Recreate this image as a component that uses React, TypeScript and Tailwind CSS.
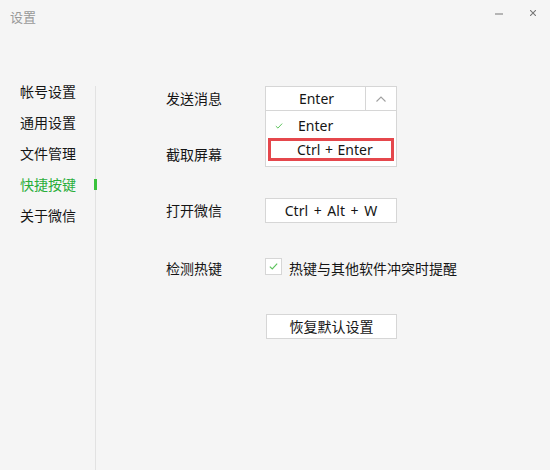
import React from "react";

const Check = ({ className }: { className?: string }) => (
  <svg viewBox="0 0 10 8" className={className} fill="none" stroke="currentColor" strokeWidth="1.3">
    <path d="M0.8 4.2 L3.6 6.8 L9.2 0.8" />
  </svg>
);

export default function App() {
  const items = ["帐号设置", "通用设置", "文件管理", "快捷按键", "关于微信"];
  return (
    <div className="w-[550px] h-[470px] bg-[#f5f5f5] flex flex-col overflow-hidden font-['Noto_Sans','Noto_Sans_CJK_SC',sans-serif] text-[14px] text-[#151515]">
      {/* title bar */}
      <div className="h-[86px] flex items-start justify-between shrink-0">
        <div className="pl-[10px] pt-[9px] text-[13px] leading-[16px] text-[#999]">设置</div>
        <div className="flex items-start">
          <div className="mt-[13px] w-[8px] h-[2px] bg-[#b5b5b5]" />
          <svg viewBox="0 0 6 6" className="ml-[27px] mr-[14px] mt-[10px] w-[6px] h-[6px]" stroke="#777" strokeWidth="1.1">
            <path d="M0 0 L6 6 M6 0 L0 6" />
          </svg>
        </div>
      </div>
      {/* body */}
      <div className="flex flex-1">
        <div className="w-[96px] border-r border-[#e2e2e2] shrink-0">
          <ul className="flex flex-col gap-[19px] pl-[20px]">
            {items.map((t) => (
              <li
                key={t}
                className={`relative leading-[12px] h-[12px] ${t === "快捷按键" ? "text-[#2aae3a]" : ""}`}
              >
                {t}
                {t === "快捷按键" && (
                  <span className="absolute right-[-2px] top-0 w-[3px] h-[11px] bg-[#39c23c]" />
                )}
              </li>
            ))}
          </ul>
        </div>
        <div className="flex-1 pl-[70px] flex flex-col">
          {/* row 1 */}
          <div className="flex items-center h-[25px]">
            <div className="w-[99px]">发送消息</div>
            <div className="relative">
              <div className="flex w-[132px] h-[25px] bg-white border border-[#d6d6d6]">
                <div className="flex-1 flex items-center justify-center border-r border-[#d6d6d6] pl-[2px]">Enter</div>
                <div className="w-[30px] flex items-center justify-center">
                  <svg viewBox="0 0 10 6" className="w-[10px] h-[6px]" fill="none" stroke="#a0a0a0" strokeWidth="1.1">
                    <path d="M0.5 5.5 L5 1 L9.5 5.5" />
                  </svg>
                </div>
              </div>
              <div className="absolute left-0 top-[25px] w-[132px] h-[56px] bg-white border border-t-0 border-[#d6d6d6] z-10">
                <div className="flex items-center h-[27px] pt-[2px]">
                  <Check className="ml-[9px] w-[8px] h-[6px] text-[#5cc35c]" />
                  <span className="ml-[15px]">Enter</span>
                </div>
                <div className="mx-[2px] h-[23px] border-[3px] border-[#e5474c] flex items-center pl-[26px] [word-spacing:1px]">
                  Ctrl + Enter
                </div>
              </div>
            </div>
          </div>
          {/* row 2 */}
          <div className="flex items-center h-[25px] mt-[31px]">
            <div className="w-[99px]">截取屏幕</div>
            <div className="w-[132px] h-[25px] bg-white border border-[#d6d6d6]" />
          </div>
          {/* row 3 */}
          <div className="flex items-center h-[25px] mt-[31px]">
            <div className="w-[99px]">打开微信</div>
            <div className="w-[132px] h-[25px] bg-white border border-[#d6d6d6] flex items-center justify-center [word-spacing:2px]">
              Ctrl + Alt + W
            </div>
          </div>
          {/* row 4 */}
          <div className="flex items-center h-[25px] mt-[31px]">
            <div className="w-[99px] pt-[4px]">检测热键</div>
            <div className="flex items-center">
              <div className="w-[17px] h-[17px] bg-white border border-[#d6d6d6] flex items-center justify-center">
                <Check className="w-[9px] h-[7px] text-[#5cc35c]" />
              </div>
              <span className="ml-[7px] pt-[4px]">热键与其他软件冲突时提醒</span>
            </div>
          </div>
          {/* row 5 */}
          <div className="flex h-[25px] mt-[35px] pl-[100px]">
            <div className="w-[131px] h-[25px] bg-white border border-[#d6d6d6] flex items-center justify-center">
              恢复默认设置
            </div>
          </div>
        </div>
      </div>
    </div>
  );
}
